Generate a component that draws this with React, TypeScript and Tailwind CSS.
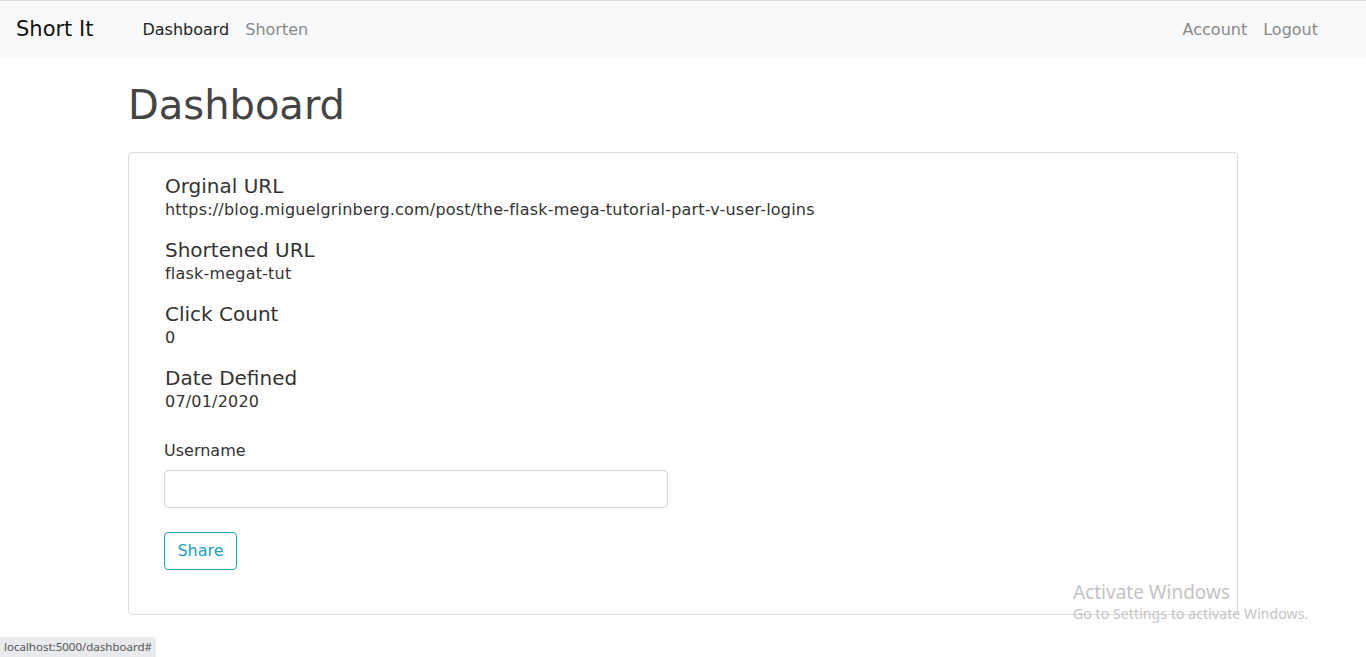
import React from 'react';

const font = { fontFamily: '"DejaVu Sans", Verdana, sans-serif' };

const fields = [
  { label: 'Orginal URL', value: 'https://blog.miguelgrinberg.com/post/the-flask-mega-tutorial-part-v-user-logins' },
  { label: 'Shortened URL', value: 'flask-megat-tut' },
  { label: 'Click Count', value: '0' },
  { label: 'Date Defined', value: '07/01/2020' },
];

export default function App() {
  return (
    <div className="relative min-h-[657px] bg-white text-[#3b3b3b]" style={font}>
      {/* NAVBAR */}
      <nav className="flex h-[57px] items-center border-t border-[#dcdcdc] bg-[#f8f9fa] pt-[2px] pl-4 pr-12">
        <span className="mr-[49px] text-[21px] text-[#111]">Short It</span>
        <div className="flex gap-4 text-[16px]">
          <a className="text-[#222]">Dashboard</a>
          <a className="text-[#888]">Shorten</a>
        </div>
        <div className="ml-auto flex gap-4 text-[16px] text-[#888]">
          <a>Account</a>
          <a>Logout</a>
        </div>
      </nav>

      {/* CONTENT */}
      <main className="mx-auto w-[1110px] pt-6">
        <h1 className="mb-[23px] text-[40px] leading-[1.2] text-[#444]">Dashboard</h1>

        <div className="rounded border border-[#dcdcdc] px-9 pt-[21px] pb-[44px]">
          {fields.map((f) => (
            <div key={f.label} className="mb-4">
              <h5 className="text-[20px] leading-[1.2] text-[#333]">{f.label}</h5>
              <p className="text-[16px] leading-[1.5] tracking-[0.2px] text-[#333]">{f.value}</p>
            </div>
          ))}

          <div className="-ml-px mt-[25px]">
            <label className="mb-[7px] block text-[16px] text-[#333]">Username</label>
            <input className="block h-[38px] w-[504px] rounded border border-[#ced4da] px-3" />
            <button className="mt-6 h-[38px] w-[73px] rounded border border-[#17a2b8] text-[16px] text-[#17a2b8]">
              Share
            </button>
          </div>
        </div>
      </main>

      {/* Windows watermark */}
      <div className="pointer-events-none absolute left-[1073px] top-[580px] text-[#c4c4c4]" style={{ fontFamily: '"Noto Sans", sans-serif' }}>
        <div className="text-[19px] leading-6">Activate Windows</div>
        <div className="text-[14px] leading-5 tracking-[0.1px]">Go to Settings to activate Windows.</div>
      </div>

      {/* status bar */}
      <div className="absolute bottom-0 left-0 rounded-tr bg-[#e8eaed] px-1 py-[2px] text-[11.5px] leading-4 text-[#555]" style={{ fontFamily: '"Noto Sans", sans-serif' }}>
        localhost:5000/dashboard#
      </div>
    </div>
  );
}
